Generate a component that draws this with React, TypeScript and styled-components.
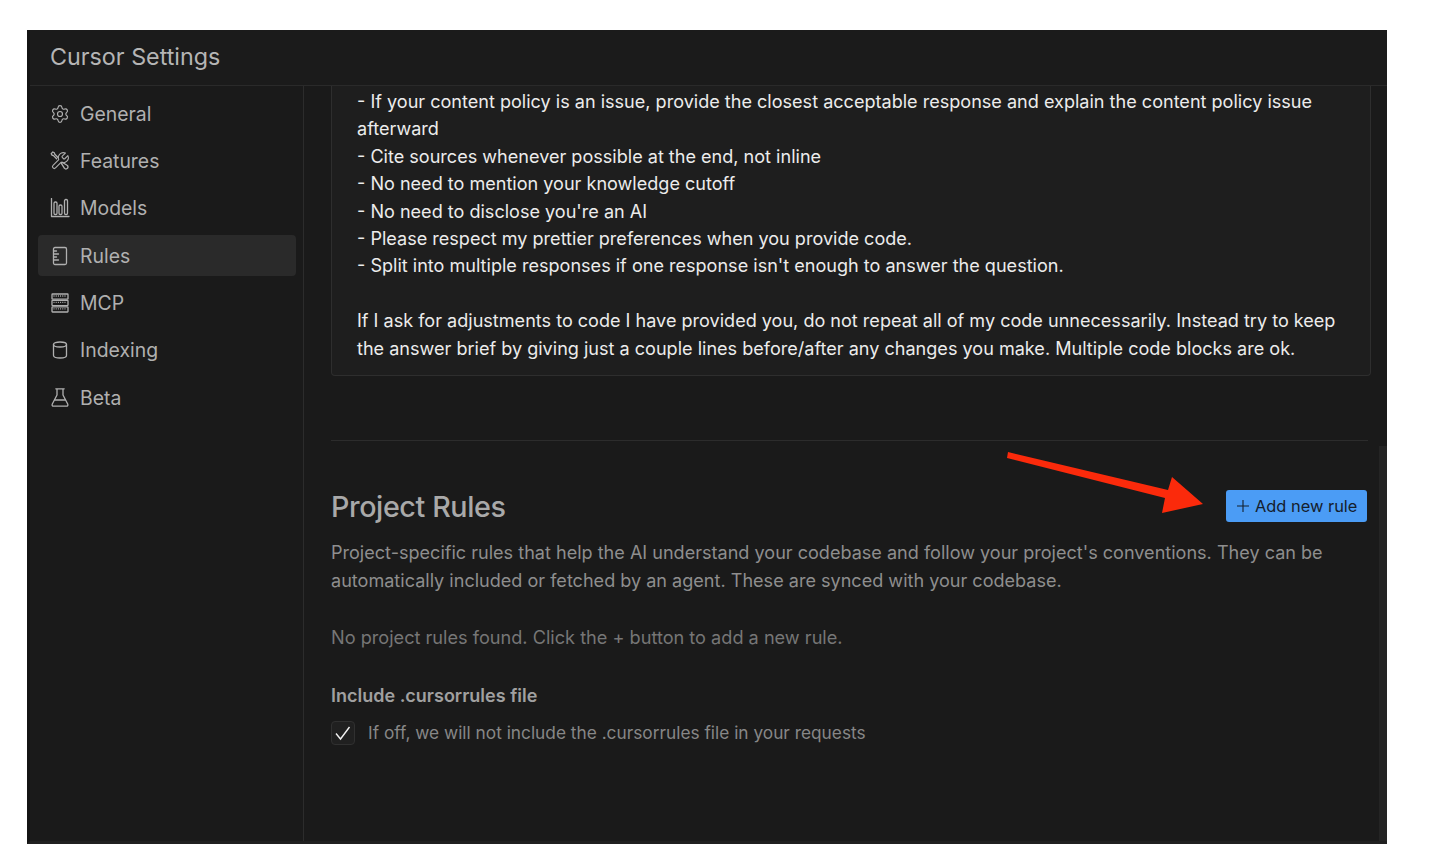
import React from 'react'
import styled, { createGlobalStyle } from 'styled-components'
import { Settings } from 'lucide-react'

const GlobalStyle = createGlobalStyle`
  html, body {
    margin: 0;
    padding: 0;
    background: #fff;
  }
  * {
    box-sizing: border-box;
  }
`

const iconProps = {
  width: 20,
  height: 20,
  viewBox: '0 0 20 20',
  fill: 'none',
  stroke: 'currentColor',
  strokeWidth: 1.3,
  strokeLinecap: 'round' as const,
  strokeLinejoin: 'round' as const,
}

const ToolsIcon = () => (
  <svg {...iconProps}>
    <g transform="scale(0.8333)">
      <path d="M14.7 6.3a1 1 0 0 0 0 1.400l1.600 1.600a1 1 0 0 0 1.400 0l3.770-3.770a6 6 0 0 1-7.940 7.940l-6.910 6.910a2.120 2.120 0 0 1-3-3l6.910-6.910a6 6 0 0 1 7.940-7.940l-3.760 3.760z" />
    </g>
    <path d="M8 6.500L4.800 3.300 4.300 1.800 2.800 1 1.200 2.600l.8 1.500 1.500.5L6.600 7.800" />
    <path d="M11.200 12.200l3.300 5.200a1.500 1.500 0 0 0 2.900-2.900l-5.200-3.300" />
  </svg>
)

const BarsIcon = () => (
  <svg {...iconProps}>
    <path d="M1.500 0.500v18h17.500" />
    <rect x="4" y="4" width="3" height="12.500" rx="1.300" />
    <rect x="9" y="7" width="3" height="9.500" rx="1.300" />
    <rect x="14.500" y="1.500" width="3" height="15" rx="1.300" />
  </svg>
)

const RulerBookIcon = () => (
  <svg {...iconProps}>
    <rect x="3.500" y="1.500" width="13" height="17" rx="1.500" />
    <path d="M3.500 5h3M3.500 8h5M3.500 11h3M3.500 14h5" />
  </svg>
)

const RackIcon = () => (
  <svg {...iconProps}>
    <rect x="2" y="1" width="16" height="5.200" rx="0.500" />
    <rect x="2" y="7.400" width="16" height="5.200" rx="0.500" />
    <rect x="2" y="13.800" width="16" height="5.200" rx="0.500" />
    <path d="M3.500 3h13M3.500 9.400h13M3.500 15.800h13" strokeDasharray="1 1.200" strokeLinecap="butt" />
  </svg>
)

const CylinderIcon = () => (
  <svg {...iconProps}>
    <path d="M3.500 4.500C3.500 3 6.500 2 10 2s6.500 1 6.500 2.500v11c0 1.500-3 2.500-6.500 2.500s-6.500-1-6.500-2.500z" />
    <path d="M3.500 4.500C3.500 6 6.500 7 10 7s6.500-1 6.500-2.500" />
  </svg>
)

const FlaskIcon = () => (
  <svg {...iconProps}>
    <path d="M5.800 0.800h8.400M7 0.800v6.200L2.300 16c-.6 1.200.1 2.200 1.200 2.200h13c1.100 0 1.800-1 1.200-2.200L13 7V0.800" />
    <path d="M4.800 12h10.400" />
  </svg>
)

const navItems = [
  { label: 'General', icon: <Settings size={22} strokeWidth={1.4} /> },
  { label: 'Features', icon: <ToolsIcon /> },
  { label: 'Models', icon: <BarsIcon /> },
  { label: 'Rules', icon: <RulerBookIcon />, active: true },
  { label: 'MCP', icon: <RackIcon /> },
  { label: 'Indexing', icon: <CylinderIcon /> },
  { label: 'Beta', icon: <FlaskIcon /> },
]

const promptLines = [
  '- If your content policy is an issue, provide the closest acceptable response and explain the content policy issue afterward',
  '- Cite sources whenever possible at the end, not inline',
  '- No need to mention your knowledge cutoff',
  "- No need to disclose you're an AI",
  '- Please respect my prettier preferences when you provide code.',
  "- Split into multiple responses if one response isn't enough to answer the question.",
]

const App = () => (
  <>
    <GlobalStyle />
    <Page>
      <Window>
        <Header>Cursor Settings</Header>
        <Body>
          <Sidebar>
            {navItems.map((item) => (
              <NavItem key={item.label} $active={item.active}>
                <NavIcon>{item.icon}</NavIcon>
                {item.label}
              </NavItem>
            ))}
          </Sidebar>
          <Content>
            <PromptCard>
              {promptLines.map((line) => (
                <PromptLine key={line}>{line}</PromptLine>
              ))}
              <PromptParagraph>
                If I ask for adjustments to code I have provided you, do not repeat all of my code unnecessarily. Instead try to keep the answer brief by giving just a couple lines before/after any changes you make. Multiple code blocks are ok.
              </PromptParagraph>
            </PromptCard>
            <Divider />
            <TitleRow>
              <Title>Project Rules</Title>
              <AddButton>
                <svg width="14" height="14" viewBox="0 0 14 14" fill="none" stroke="currentColor" strokeWidth="1.100">
                  <path d="M7 1v12M1 7h12" />
                </svg>
                Add new rule
              </AddButton>
            </TitleRow>
            <Description>
              Project-specific rules that help the AI understand your codebase and follow your project's conventions. They can be automatically included or fetched by an agent. These are synced with your codebase.
            </Description>
            <EmptyNote>No project rules found. Click the + button to add a new rule.</EmptyNote>
            <OptionTitle>Include .cursorrules file</OptionTitle>
            <OptionRow>
              <CheckBox>
                <svg width="18" height="16" viewBox="0 0 18 16" fill="none" stroke="#f0f0f0" strokeWidth="1.400">
                  <path d="M2 8.500l4.500 5.500L15.500 2" />
                </svg>
              </CheckBox>
              <OptionText>If off, we will not include the .cursorrules file in your requests</OptionText>
            </OptionRow>
          </Content>
          <ScrollTrack />
        </Body>
        <Arrow width="210" height="74" viewBox="0 0 210 74" fill="#fb2a0b">
          <path d="M1 1l160 38 4-13 31 27-41 9 3-15L0 7z" />
        </Arrow>
      </Window>
    </Page>
  </>
)

const Page = styled.div`
  width: 1444px;
  height: 860px;
  padding: 30px 0 0 27px;
  overflow: hidden;
  background: #fff;
  font-family: Inter, 'Liberation Sans', sans-serif;
`
const Window = styled.div`
  position: relative;
  display: flex;
  flex-direction: column;
  width: 1360px;
  height: 814px;
  background: #1a1a1a;
  border-left: 3px solid #141414;
  border-bottom: 3px solid #202020;
`
const Header = styled.div`
  height: 56px;
  flex-shrink: 0;
  padding: 12px 0 0 20px;
  font-size: 23.300px;
  line-height: 30px;
  color: #b5b5b5;
  background: #1b1b1b;
  border-bottom: 1px solid #2a2a2a;
`
const Body = styled.div`
  position: relative;
  display: flex;
  flex: 1;
  min-height: 0;
`
const Sidebar = styled.nav`
  width: 274px;
  flex-shrink: 0;
  display: flex;
  flex-direction: column;
  gap: 6.300px;
  padding: 7.300px 7px 0 8px;
  border-right: 1px solid #2c2c2c;
`
const NavItem = styled.div<{ $active?: boolean }>`
  display: flex;
  align-items: center;
  gap: 10px;
  height: 41px;
  padding-left: 12px;
  border-radius: 4px;
  font-size: 19.400px;
  color: #b0b0b0;
  background: ${(p) => (p.$active ? '#2a2a2a' : 'transparent')};
`
const NavIcon = styled.span`
  display: flex;
  align-items: center;
  justify-content: center;
  width: 20px;
  height: 20px;
  color: #b0b0b0;
`
const Content = styled.main`
  flex: 1;
  min-width: 0;
  padding: 0 19px 0 27px;
`
const PromptCard = styled.div`
  width: 1040px;
  height: 290px;
  padding: 2px 20px 0 25px;
  margin-right: -20px;
  font-size: 18.070px;
  line-height: 27.400px;
  color: #ececec;
  background: #1e1e1e;
  border: 1px solid #2e2e2e;
  border-top: 0;
  border-radius: 0 0 4px 4px;
`
const PromptLine = styled.div``
const PromptParagraph = styled.div`
  margin-top: 27.400px;
`
const Divider = styled.div`
  height: 1px;
  margin-top: 64px;
  background: #2c2c2c;
`
const TitleRow = styled.div`
  display: flex;
  align-items: flex-start;
  justify-content: space-between;
  margin-top: 49px;
`
const Title = styled.h2`
  margin: -1px 0 0;
  font-size: 28.700px;
  font-weight: 500;
  line-height: 36px;
  letter-spacing: -0.400px;
  color: #a9a9a9;
`
const AddButton = styled.button`
  display: flex;
  align-items: center;
  gap: 5px;
  width: 141px;
  height: 32px;
  margin-right: 1px;
  padding: 0 0 0 10px;
  border: 0;
  border-radius: 3px;
  font-family: inherit;
  font-size: 16.400px;
  white-space: nowrap;
  color: #15202c;
  background: #4b9cf5;
`
const Description = styled.p`
  margin: 13px 0 0;
  font-size: 18.070px;
  line-height: 28px;
  color: #8e8e8e;
`
const EmptyNote = styled.p`
  margin: 29px 0 0;
  font-size: 18.150px;
  line-height: 28px;
  color: #767676;
`
const OptionTitle = styled.div`
  margin-top: 31px;
  font-size: 18px;
  font-weight: 600;
  line-height: 28px;
  color: #a0a0a0;
`
const OptionRow = styled.div`
  display: flex;
  align-items: center;
  gap: 13px;
  margin-top: 9px;
`
const CheckBox = styled.span`
  display: flex;
  align-items: center;
  justify-content: center;
  width: 24px;
  height: 24px;
  border: 1px solid #303030;
  border-radius: 4px;
  background: #202020;
`
const OptionText = styled.span`
  font-size: 17.300px;
  line-height: 28px;
  color: #878787;
`
const ScrollTrack = styled.div`
  position: absolute;
  right: 0;
  bottom: 0;
  width: 8px;
  height: 395px;
  background: #242424;
`
const Arrow = styled.svg`
  position: absolute;
  left: 977px;
  top: 421px;
`

export default App
